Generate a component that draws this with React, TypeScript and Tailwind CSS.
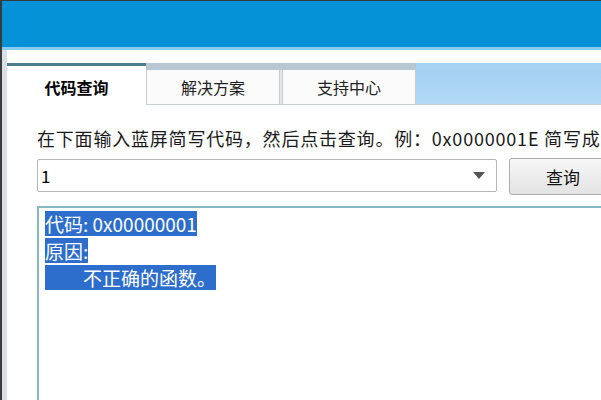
import React from 'react'

const font = { fontFamily: '"Noto Sans CJK SC", "Noto Sans", sans-serif' }

function Tabs() {
  return (
    <div className="flex h-[42px] items-stretch">
      {/* active tab */}
      <div className="w-[139px] shrink-0 bg-white border-t-[3px] border-[#4f7d8d] flex items-center justify-center pt-[2px]">
        <span className="text-[16px] font-bold text-black">代码查询</span>
      </div>
      <div className="flex-1 min-w-0 flex flex-col">
        <div className="h-[7px] bg-[#b9c7d2] flex">
          <div className="w-[270px] shrink-0" />
          <div className="flex-1 bg-[#a8d2f2]" />
        </div>
        <div className="flex-1 flex border-b border-[#c9cfd4]">
          <div className="w-[134px] shrink-0 bg-[#fbfbfb] border-l border-r border-[#cccccc] flex items-center justify-center">
            <span className="text-[16px] text-[#222]">解决方案</span>
          </div>
          <div className="w-[2px] shrink-0 bg-[#e2e6ea]" />
          <div className="w-[134px] shrink-0 bg-[#fbfbfb] border-l border-r border-[#cccccc] flex items-center justify-center">
            <span className="text-[16px] text-[#222]">支持中心</span>
          </div>
          <div className="flex-1 bg-gradient-to-b from-[#a4d0f2] to-[#b2daf6]" />
        </div>
      </div>
    </div>
  )
}

function Line({ text }: { text: string }) {
  return (
    <div className="h-[27px] whitespace-pre">
      <span className="inline-block h-[25px] leading-[25px] bg-[#2d6dcb]">{text}</span>
    </div>
  )
}

export default function App() {
  return (
    <div className="w-[601px] h-[400px] overflow-hidden bg-[#3b3b3b] pl-[2px] pt-[1px]" style={font}>
      <div className="h-full flex flex-col">
        <div className="h-[46px] shrink-0 bg-[#0592d6]" />
        <div className="h-[3px] shrink-0 bg-[#86ccee]" />
        <div className="flex-1 flex min-h-0">
          <div className="w-[5px] shrink-0 bg-[#d9dfe4]" />
          <div className="flex-1 min-w-0 bg-white flex flex-col">
            <div className="h-[13px] shrink-0" />
            <Tabs />
            <div className="flex-1 min-h-0 pl-[30px] flex flex-col">
              <div className="h-[22px] shrink-0" />
              <div className="whitespace-nowrap text-[18px] tracking-[0.8px] leading-[22px] text-[#1a1a1a] overflow-hidden">
                在下面输入蓝屏简写代码，然后点击查询。例：0x0000001E 简写成
              </div>
              <div className="h-[10px] shrink-0" />
              <div className="flex items-start">
                <div className="w-[460px] shrink-0 h-[33px] border border-[#b6b6b6] rounded-[2px] bg-white flex items-center pl-[3px] pr-[11px]">
                  <span className="text-[17px] text-black flex-1">1</span>
                  <svg width="12" height="7" viewBox="0 0 12 7">
                    <polygon points="0,0 12,0 6,7" fill="#555" />
                  </svg>
                </div>
                <div className="ml-[12px] -mt-[1px] w-[120px] shrink-0 h-[37px] border border-[#acacac] rounded-[3px] bg-gradient-to-b from-[#f7f7f7] to-[#e3e3e3] flex items-center pl-[36px]">
                  <span className="text-[17px] text-[#111]">查询</span>
                </div>
              </div>
              <div className="h-[11px] shrink-0" />
              <div className="flex-1 border-2 border-r-0 border-b-0 border-[#86b7c5] pl-[6px] pt-[2px] text-[19px] text-white">
                <Line text="代码: 0x00000001" />
                <Line text="原因:" />
                <Line text={'\u3000\u3000不正确的函数。'} />
              </div>
            </div>
          </div>
        </div>
      </div>
    </div>
  )
}
